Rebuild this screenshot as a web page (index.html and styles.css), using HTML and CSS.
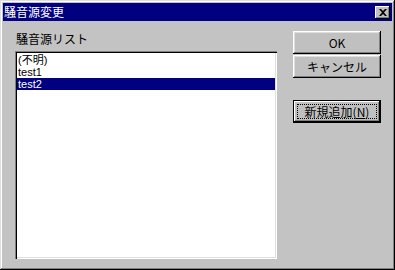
FILE: index.html
```html
<!DOCTYPE html>
<html lang="ja">
<head>
    <meta charset="UTF-8">
    <title>騒音源変更</title>
    <link rel="stylesheet" href="styles.css">
</head>
<body>
    <div class="ventana">
        <div class="titulo">
            <span class="titulo-texto">騒音源変更</span>
            <div class="cerrar">
                <svg width="8" height="7" viewBox="0 0 8 7">
                    <path d="M0 0h2l2 2 2-2h2L5 3.5 8 7H6L4 5 2 7H0l3-3.5z" fill="#000"/>
                </svg>
            </div>
        </div>

        <div class="contenido">
            <div class="columna-lista">
                <div class="etiqueta">騒音源リスト</div>
                <div class="lista">
                    <div class="item">(不明)</div>
                    <div class="item">test1</div>
                    <div class="item sel">test2</div>
                </div>
            </div>

            <div class="columna-botones">
                <div class="boton">OK</div>
                <div class="boton">キャンセル</div>
                <div class="boton defecto"><span class="foco">新規追加(<u>N</u>)</span></div>
            </div>
        </div>
    </div>
</body>
</html>
```

FILE: styles.css
```css
body{
    margin: 0;
    background: #c0c0c0;
    font-family: "Liberation Sans", "Noto Sans CJK JP", sans-serif;
    font-size: 12px;
}

.ventana{
    width: 395px;
    height: 270px;
    box-sizing: border-box;
    padding: 3px;
    background: #c3c3c3;
    box-shadow: inset -1px -1px #000, inset 1px 1px #dfdfdf, inset -2px -2px #808080, inset 2px 2px #fff;
}

.titulo{
    height: 18px;
    background: #000080;
    color: #fff;
    display: flex;
    align-items: center;
    justify-content: space-between;
    padding: 0 2px 0 1px;
}

.titulo-texto{
    font-family: "Noto Sans CJK JP", sans-serif;
    font-size: 12px;
    line-height: 14px;
}

.cerrar{
    width: 15px;
    height: 13px;
    box-sizing: border-box;
    background: #c0c0c0;
    box-shadow: inset -1px -1px #000, inset 1px 1px #fff, inset -2px -2px #808080;
    display: flex;
    align-items: center;
    justify-content: center;
}

.contenido{
    display: flex;
    padding: 10px 0 0 12px;
}

.columna-lista{
    display: flex;
    flex-direction: column;
}

.etiqueta{
    font-family: "Noto Sans CJK JP", sans-serif;
    height: 20px;
    line-height: 16px;
    padding-left: 1px;
}

.lista{
    width: 262px;
    height: 208px;
    box-sizing: border-box;
    background: #fff;
    padding: 3px 2px;
    box-shadow: inset 1px 1px #808080, inset 2px 2px #000, inset -1px -1px #fff, inset -2px -2px #dfdfdf;
}

.item{
    height: 12px;
    line-height: 12px;
    font-size: 11px;
    padding-left: 1px;
    overflow: hidden;
}

.item.sel{
    background: #000080;
    color: #fff;
}

.columna-botones{
    display: flex;
    flex-direction: column;
    gap: 1px;
    margin-left: 16px;
}

.boton{
    width: 88px;
    height: 23px;
    box-sizing: border-box;
    background: #c0c0c0;
    box-shadow: inset -1px -1px #000, inset 1px 1px #fff, inset -2px -2px #808080, inset 2px 2px #dfdfdf;
    display: flex;
    align-items: center;
    justify-content: center;
    font-family: "Noto Sans CJK JP", sans-serif;
}

.boton.defecto{
    margin-top: 21px;
    border: 1px solid #000;
    box-shadow: inset -1px -1px #000, inset 1px 1px #fff, inset -2px -2px #808080;
}

.foco{
    width: 80px;
    height: 15px;
    box-sizing: border-box;
    border: 1px dotted #000;
    display: flex;
    align-items: center;
    justify-content: center;
    line-height: 13px;
}

.foco u{
    text-decoration: underline;
}
```
